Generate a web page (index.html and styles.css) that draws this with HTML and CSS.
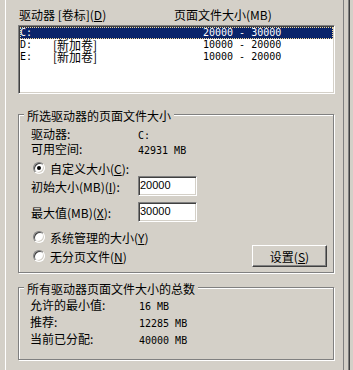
FILE: index.html
```html
<!DOCTYPE html>
<html lang="zh-CN">
<head>
    <meta charset="UTF-8">
    <title>虚拟内存</title>
    <link rel="stylesheet" href="styles.css">
</head>
<body>
    <div class="dialog">
    <div class="sheet">
        <div class="list-head">
            <span class="col-drive">驱动器 [卷标](<u>D</u>)</span>
            <span class="col-size">页面文件大小(MB)</span>
        </div>

        <div class="listbox">
            <div class="row selected">
                <span class="mono">C:</span>
                <span></span>
                <span class="mono">20000 - 30000</span>
            </div>
            <div class="row">
                <span class="mono">D:</span>
                <span>[新加卷]</span>
                <span class="mono">10000 - 20000</span>
            </div>
            <div class="row">
                <span class="mono">E:</span>
                <span>[新加卷]</span>
                <span class="mono">10000 - 20000</span>
            </div>
        </div>

        <!-- selected drive -->
        <div class="group group-drive">
            <span class="legend">所选驱动器的页面文件大小</span>
            <div class="info-row"><span class="label">驱动器:</span><span class="value mono">C:</span></div>
            <div class="info-row"><span class="label">可用空间:</span><span class="value mono">42931 MB</span></div>

            <div class="radio-row first">
                <span class="radio checked"></span>
                <span>自定义大小(<u>C</u>):</span>
            </div>
            <div class="field-row">
                <span class="label">初始大小(MB)(<u>I</u>):</span>
                <input class="text-input" type="text" value="20000">
            </div>
            <div class="field-row second">
                <span class="label">最大值(MB)(<u>X</u>):</span>
                <input class="text-input" type="text" value="30000">
            </div>

            <div class="bottom-row">
                <div class="radio-col">
                    <div class="radio-row">
                        <span class="radio"></span>
                        <span>系统管理的大小(<u>Y</u>)</span>
                    </div>
                    <div class="radio-row">
                        <span class="radio"></span>
                        <span>无分页文件(<u>N</u>)</span>
                    </div>
                </div>
                <button class="btn" type="button">设置(<u>S</u>)</button>
            </div>
        </div>

        <!-- totals -->
        <div class="group group-total">
            <span class="legend">所有驱动器页面文件大小的总数</span>
            <div class="total-row"><span class="label">允许的最小值:</span><span class="value mono">16 MB</span></div>
            <div class="total-row"><span class="label">推荐:</span><span class="value mono">12285 MB</span></div>
            <div class="total-row"><span class="label">当前已分配:</span><span class="value mono">40000 MB</span></div>
        </div>
    </div>
    </div>
</body>
</html>
```

FILE: styles.css
```css
body {
    margin: 0;
    background-color: #d4d0c8;
    font-family: "Noto Sans CJK SC", "Noto Sans", sans-serif;
    font-size: 12px;
    color: #000;
    overflow: hidden;
}
.dialog {
    box-sizing: border-box;
    width: 350px;
    height: 370px;
    border-right: 1px solid #404040;
    box-shadow: inset -1px 0 #808080;
}
.sheet {
    box-sizing: border-box;
    margin-left: 5px;
    width: 339px;
    height: 370px;
    padding-left: 12px;
    border-left: 1px solid #fff;
    border-right: 1px solid #808080;
}
.mono {
    font-family: "DejaVu Sans Mono", monospace;
    font-size: 10px;
}
.list-head {
    display: flex;
    height: 14px;
    line-height: 14px;
    padding-top: 8px;
    padding-left: 1px;
    margin-bottom: 3px;
}
.col-drive {
    width: 155px;
}
.listbox {
    box-sizing: border-box;
    width: 317px;
    height: 69px;
    background-color: #fff;
    border: 1px solid;
    border-color: #808080 #fff #fff #808080;
    box-shadow: inset 1px 1px #404040, inset -1px -1px #d4d0c8;
    padding: 1px;
}
.row {
    display: grid;
    grid-template-columns: 33px 150px 1fr;
    height: 12px;
    line-height: 12px;
    white-space: nowrap;
}
.row.selected {
    background-color: #0a246a;
    color: #fff;
    outline: 1px dotted #f5db95;
    outline-offset: -1px;
}
.group {
    position: relative;
    box-sizing: border-box;
    width: 316px;
    border: 1px solid #808080;
    box-shadow: inset 1px 1px #fff, 1px 1px #fff;
}
.legend {
    position: absolute;
    top: -6px;
    left: 5px;
    padding: 0 3px;
    line-height: 14px;
    background-color: #d4d0c8;
}
.label {
    display: inline-block;
}
.group-drive {
    margin-top: 20px;
    height: 159px;
    padding: 11px 6px 5px 12px;
}
.group-drive .label {
    width: 107px;
}
.info-row {
    height: 15px;
    line-height: 15px;
}
.radio-row {
    display: flex;
    align-items: center;
    gap: 5px;
    height: 16px;
    padding-left: 2px;
}
.radio-row.first {
    margin-top: 4px;
}
.radio {
    position: relative;
    box-sizing: border-box;
    width: 12px;
    height: 12px;
    border-radius: 50%;
    background-color: #fff;
    border: 1px solid;
    border-color: #808080 #fff #fff #808080;
    box-shadow: inset 1px 1px #404040, inset -1px -1px #d4d0c8;
}
.radio.checked::after {
    content: "";
    position: absolute;
    left: 3px;
    top: 3px;
    width: 4px;
    height: 4px;
    border-radius: 50%;
    background-color: #000;
}
.field-row {
    display: flex;
    height: 20px;
}
.field-row .label {
    padding-top: 3px;
    line-height: 16px;
}
.field-row.second {
    margin-top: 6px;
}
.text-input {
    box-sizing: border-box;
    width: 59px;
    height: 20px;
    margin: 0;
    padding: 0 1px 2px;
    font-family: "Liberation Sans", Arial, sans-serif;
    font-size: 11px;
    background-color: #fff;
    border: 1px solid;
    border-color: #808080 #fff #fff #808080;
    box-shadow: inset 1px 1px #404040, inset -1px -1px #d4d0c8;
    outline: none;
}
.bottom-row {
    display: flex;
    justify-content: space-between;
    margin-top: 7px;
}
.radio-col {
    display: flex;
    flex-direction: column;
    gap: 3px;
}
.btn {
    box-sizing: border-box;
    width: 75px;
    height: 22px;
    margin-top: 16px;
    padding: 0;
    font-family: inherit;
    font-size: 12px;
    background-color: #d4d0c8;
    border: 1px solid;
    border-color: #fff #404040 #404040 #fff;
    box-shadow: inset -1px -1px #808080;
}
.group-total {
    margin-top: 14px;
    height: 73px;
    padding: 8px 6px 0 11px;
}
.group-total .label {
    width: 109px;
}
.total-row {
    height: 17px;
    line-height: 17px;
}
```
